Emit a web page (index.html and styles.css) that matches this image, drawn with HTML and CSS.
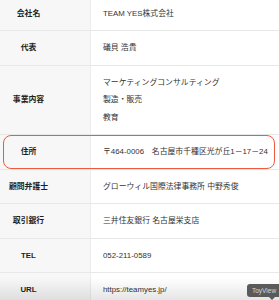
FILE: index.html
```html
<!DOCTYPE html>
<html lang="ja">
<head>
<meta charset="utf-8">
<link rel="stylesheet" href="styles.css">
</head>
<body>
<div class="page">
  <table class="info">
    <tr><th>会社名</th><td>TEAM YES株式会社</td></tr>
    <tr><th>代表</th><td>礒貝 浩貴</td></tr>
    <tr><th>事業内容</th><td>マーケティングコンサルティング<br>製造・販売<br>教育</td></tr>
    <tr><th>住所</th><td>〒464-0006　名古屋市千種区光が丘1－17－24</td></tr>
    <tr><th>顧問弁護士</th><td>グローウィル国際法律事務所 中野秀俊</td></tr>
    <tr><th>取引銀行</th><td>三井住友銀行 名古屋栄支店</td></tr>
    <tr><th>TEL</th><td>052-211-0589</td></tr>
    <tr><th>URL</th><td>https://teamyes.jp/</td></tr>
  </table>
  <div class="highlight"></div>
  <div class="fade"></div>
  <div class="tooltip">ToyView</div>
</div>
</body>
</html>
```

FILE: styles.css
```css
html, body {
  margin: 0;
  padding: 0;
  background: #ffffff;
}
.page {
  position: relative;
  width: 279px;
  height: 300px;
  overflow: hidden;
  font-family: "Liberation Sans", "Noto Sans CJK JP", sans-serif;
  font-size: 7.85px;
  color: #333333;
}
.info {
  width: 100%;
  border-collapse: collapse;
  margin-top: -3.5px;
}
.info th,
.info td {
  padding: 8px 0;
  line-height: 17.5px;
  border-bottom: 1px solid #e8e8e8;
  vertical-align: middle;
}
.info th {
  width: 57px;
  padding-right: 33px;
  background: #f7f7f7;
  border-right: 1px solid #ececec;
  font-weight: bold;
  color: #1e1e1e;
  text-align: center;
  white-space: nowrap;
}
.info td {
  padding-left: 12px;
  text-align: left;
  white-space: nowrap;
}
.highlight {
  position: absolute;
  left: 3px;
  top: 135px;
  width: 270px;
  height: 32px;
  border: 1.6px solid #ef5a3c;
  border-radius: 8px;
}
.fade {
  position: absolute;
  left: 0;
  right: 0;
  bottom: 0;
  height: 22px;
  background: linear-gradient(to bottom, rgba(0,0,0,0), rgba(0,0,0,0.10));
  pointer-events: none;
}
.tooltip {
  position: absolute;
  left: 247px;
  top: 284px;
  padding: 0 6px 0 5px;
  height: 13px;
  line-height: 13px;
  background: #5a5a5a;
  color: #d8d8d8;
  font-size: 6.5px;
  border-radius: 3px;
  white-space: nowrap;
}
.tooltip::after {
  content: "";
  position: absolute;
  left: 22px;
  bottom: -3px;
  border-left: 3px solid transparent;
  border-right: 3px solid transparent;
  border-top: 3px solid #5a5a5a;
}
```
